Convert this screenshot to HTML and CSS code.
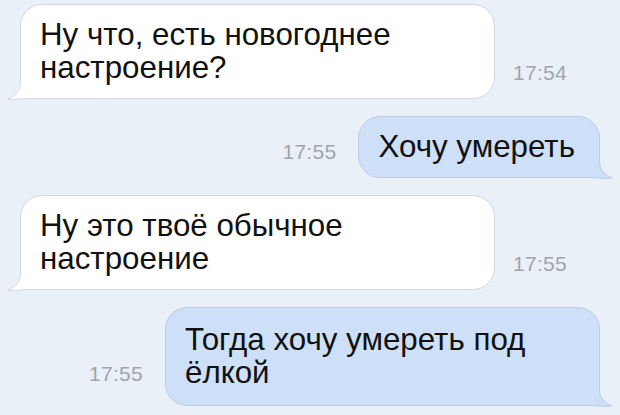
FILE: index.html
```html
<!DOCTYPE html>
<html lang="ru">
<head>
<meta charset="utf-8">
<link rel="stylesheet" href="styles.css">
</head>
<body>
<div class="chat">
  <div class="row in">
    <div class="bubble wide">Ну что, есть новогоднее настроение?
      <svg class="tail" viewBox="0 0 30 30" width="30" height="30"><path class="tf" d="M13,0 L30,0 L30,29.5 L18,29.5 C14,30 7,30.5 1,30 C8,27 13,22 13,14 Z"/><path class="ts" d="M13.5,0 L13.5,14 C13.5,22 8,27 1,30 C7,30.6 14,30.2 18,29.5 L30,29.5"/></svg>
    </div>
    <span class="time">17:54</span>
  </div>
  <div class="row out">
    <span class="time">17:55</span>
    <div class="bubble">Хочу умереть
      <svg class="tail" viewBox="0 0 30 30" width="30" height="30"><path class="tf" d="M13,0 L30,0 L30,29.5 L18,29.5 C14,30 7,30.5 1,30 C8,27 13,22 13,14 Z"/><path class="ts" d="M13.5,0 L13.5,14 C13.5,22 8,27 1,30 C7,30.6 14,30.2 18,29.5 L30,29.5"/></svg>
    </div>
  </div>
  <div class="row in">
    <div class="bubble wide">Ну это твоё обычное настроение
      <svg class="tail" viewBox="0 0 30 30" width="30" height="30"><path class="tf" d="M13,0 L30,0 L30,29.5 L18,29.5 C14,30 7,30.5 1,30 C8,27 13,22 13,14 Z"/><path class="ts" d="M13.5,0 L13.5,14 C13.5,22 8,27 1,30 C7,30.6 14,30.2 18,29.5 L30,29.5"/></svg>
    </div>
    <span class="time">17:55</span>
  </div>
  <div class="row out last">
    <span class="time">17:55</span>
    <div class="bubble medium">Тогда хочу умереть под ёлкой
      <svg class="tail" viewBox="0 0 30 30" width="30" height="30"><path class="tf" d="M13,0 L30,0 L30,29.5 L18,29.5 C14,30 7,30.5 1,30 C8,27 13,22 13,14 Z"/><path class="ts" d="M13.5,0 L13.5,14 C13.5,22 8,27 1,30 C7,30.6 14,30.2 18,29.5 L30,29.5"/></svg>
    </div>
  </div>
</div>
</body>
</html>
```

FILE: styles.css
```css
html, body {
  margin: 0;
  padding: 0;
  background: #eaf0f8;
}
body {
  width: 620px;
  height: 415px;
  overflow: hidden;
  font-family: "Liberation Sans", Arial, sans-serif;
}
.chat {
  display: flex;
  flex-direction: column;
  gap: 17px;
  padding-top: 4px;
}
.row {
  display: flex;
  align-items: flex-end;
}
.row.in {
  padding-left: 20px;
  gap: 18px;
}
.row.out {
  justify-content: flex-end;
  padding-right: 20px;
  gap: 22px;
}
.bubble {
  position: relative;
  box-sizing: border-box;
  font-size: 31.3px;
  line-height: 33px;
  color: #111;
  padding: 13px 24px 14px 19px;
  border-radius: 22px;
  border: 1px solid #d3d8df;
  background: #fff;
}
.bubble.wide {
  width: 475px;
}
.bubble.medium {
  width: 435px;
  padding-top: 15px;
  padding-bottom: 16px;
}
.in .bubble {
  border-bottom-left-radius: 0;
}
.out .bubble {
  background: #cee0f7;
  border-color: #bccde4;
  border-bottom-right-radius: 0;
}
.tail {
  position: absolute;
  bottom: -1px;
  left: -14px;
  overflow: visible;
}
.out .tail {
  left: auto;
  right: -14px;
  transform: scaleX(-1);
}
.tf {
  fill: #fff;
}
.ts {
  fill: none;
  stroke: #d3d8df;
  stroke-width: 1;
}
.out .tf {
  fill: #cee0f7;
}
.out .ts {
  stroke: #bccde4;
}
.time {
  font-size: 21px;
  line-height: 24px;
  color: #a0a5ad;
  letter-spacing: 0.3px;
  padding-bottom: 14px;
}
.last .time {
  padding-bottom: 20px;
}
```
